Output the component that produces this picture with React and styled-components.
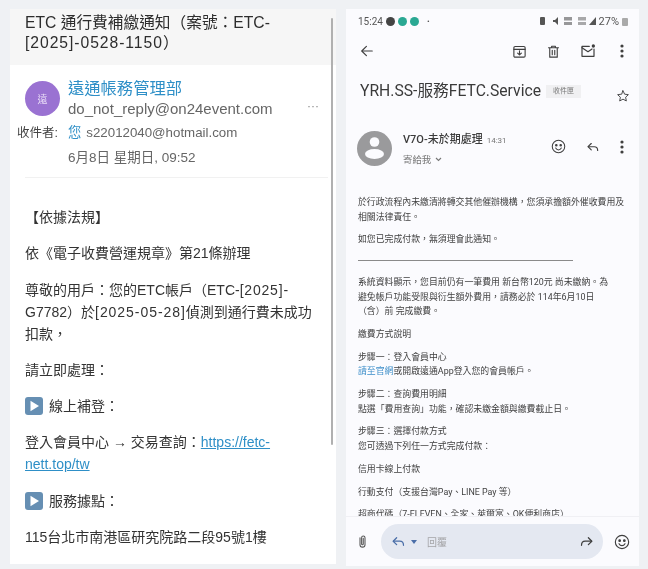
import React from "react";
import styled, { createGlobalStyle } from "styled-components";

const Global = createGlobalStyle`
  html, body { margin: 0; padding: 0; background: #eff1f4; }
  * { box-sizing: border-box; }
`;
const Page = styled.div`
  width: 648px; height: 569px; overflow: hidden; display: flex; gap: 10px;
  padding: 9px 9px 3px 10px; background: #eff1f4; filter: blur(0.35px);
`;
const LeftCard = styled.section`
  position: relative; width: 326px; height: 555px; background: #fff; overflow: hidden;
  font-family: "Liberation Sans", "Noto Sans CJK TC", sans-serif; color: #333;
`;
const Scrollbar = styled.div`
  position: absolute; top: 9px; right: 3px; width: 2.5px; height: 427px; background: #b0b0b0; border-radius: 2px;
`;
const Subject = styled.h1`
  margin: 0; height: 56px; padding: 4px 60px 0 15px; background: #f6f6f6;
  font-size: 15.7px; line-height: 19.5px; font-weight: 400; color: #2d2d2d;
`;
const Meta = styled.div`
  margin: 0 8px 0 15px; padding: 12px 0 9px; border-bottom: 1px solid #f1f1f1; display: grid;
  grid-template-columns: 35px 1fr 22px; column-gap: 8px; align-items: center;
`;
const Avatar = styled.div`
  width: 35px; height: 35px; border-radius: 50%; background: #9a72d2; color: #e9ddf7; font-size: 10px;
  display: flex; align-items: center; justify-content: center;
`;
const Sender = styled.div`display: flex; flex-direction: column;`;
const SenderName = styled.div`font-size: 16.3px; line-height: 22px; color: #2e8fc7;`;
const SenderMail = styled.div`font-size: 15px; line-height: 20px; color: #666;`;
const More = styled.div`
  font-size: 12px; color: #888; align-self: end; line-height: 18px; text-align: right; margin: 0 9px 4px -9px; white-space: nowrap;
`;
const RecipientRow = styled.div`
  grid-column: 1 / -1; display: flex; align-items: baseline; margin: 4px 0 0 -8px; font-size: 13.3px; line-height: 20px; color: #666;
`;
const RecipientLabel = styled.span`width: 44px; margin-right: 9px; color: #444; font-size: 12.5px; white-space: nowrap;`;
const You = styled.span`color: #2e8fc7; margin: 0 5px 0 -2px;`;
const DateRow = styled.div`grid-column: 2 / -1; font-size: 13.5px; line-height: 20px; color: #666; margin-top: 5px;`;
const MailBody = styled.div`
  padding: 28px 15px 0 15px; font-size: 14px; line-height: 22px; color: #333;
`;
const Para = styled.p`margin: 0 0 14.3px;`;
const Wide = styled.span`letter-spacing: ${p => p.$s}px;`;
const Link = styled.a`color: #2e8fc7; text-decoration: underline;`;
const PlayBox = styled.svg`width: 18px; height: 18px; vertical-align: -4px; margin-right: 6px;`;

const Play = () => (
  <PlayBox viewBox="0 0 18 18">
    <rect width="18" height="18" rx="3" fill="#668fb3" />
    <path d="M5.5 3.8 14 9l-8.5 5.2z" fill="#fff" />
  </PlayBox>
);

const RightCard = styled.section`
  width: 293px; height: 557px; background: #fbfbfe; display: flex; flex-direction: column; overflow: hidden;
  font-family: Roboto, "Noto Sans CJK TC", sans-serif; color: #444;
`;
const StatusBar = styled.div`
  height: 24px; padding: 0 11px 0 12px; display: flex; align-items: center; justify-content: space-between;
  font-size: 10px; color: #555;
`;
const StatusGroup = styled.div`display: flex; align-items: center; gap: 3px;`;
const Dot = styled.span`width: 9px; height: 9px; border-radius: 50%; background: ${p => p.$c}; display: inline-block;`;
const Bullet = styled.span`margin-left: 5px; font-size: 8px;`;
const Battery = styled.span`font-size: 11px;`;
const Toolbar = styled.div`
  height: 36px; padding: 0 15px 0 14px; display: flex; align-items: center; justify-content: space-between;
`;
const Actions = styled.div`display: flex; align-items: center; gap: 19px;`;
const OverflowSlot = styled.div`display: flex; margin-left: 5px;`;
const SubjectRow = styled.div`
  height: 44px; padding: 0 9px 3px 14px; display: flex; align-items: center; gap: 5px;
  font-size: 15.7px; color: #3a3a3a;
`;
const Chip = styled.span`
  font-size: 7px; line-height: 9px; color: #777; background: #f0f0f2; padding: 2px 7px; margin-top: 3px; white-space: nowrap;
`;
const StarSpace = styled.div`margin-left: auto; padding-top: 12px; display: flex;`;
const SenderRow = styled.div`
  height: 36px; margin-top: 17px; padding: 0 15px 0 11px; display: grid; grid-template-columns: 35px 1fr auto; column-gap: 11px; align-items: center;
`;
const SenderInfo = styled.div`display: flex; flex-direction: column; gap: 6px; padding-top: 2px;`;
const SenderTitle = styled.div`font-size: 11px; font-weight: 500; color: #3c3c3c; line-height: 14px;`;
const Time = styled.span`font-size: 8px; font-weight: 400; color: #777; margin-left: 4px;`;
const ToMe = styled.div`font-size: 9.4px; color: #777; line-height: 12px; display: flex; align-items: center; gap: 4px;`;
const SenderActions = styled.div`display: flex; align-items: center; gap: 20px; margin-bottom: 3px;`;
const Body = styled.div`
  flex: 1; min-height: 0; overflow: hidden; padding: 29px 12px 0 12px; font-size: 8.9px; line-height: 14.6px; color: #3f3f3f;
`;
const Block = styled.p`margin: 0 0 8.2px;`;
const Rule = styled.div`width: 215px; height: 1px; background: #8a8a8a; margin: 13px 0 14px;`;
const Blue = styled.span`color: #3c8ec9;`;
const Composer = styled.div`
  height: 50px; border-top: 1px solid #f0f0f4; padding: 0 9px 0 9px; display: flex; align-items: center; gap: 11px; flex-shrink: 0;
`;
const Pill = styled.div`
  flex: 1; height: 35px; border-radius: 18px; background: #e4e8f1; padding: 0 9px 0 10px; display: flex; align-items: center; gap: 5px;
`;
const Hint = styled.span`font-size: 10px; color: #a5a5a8; margin-left: 5px; flex: 1;`;

const Ic = ({ size = 16, sw = 1.8, children, color = "#3f3f3f" }) => (
  <svg width={size} height={size} viewBox="0 0 24 24" fill="none" stroke={color} strokeWidth={sw} strokeLinecap="round" strokeLinejoin="round">
    {children}
  </svg>
);
const Kebab = ({ h = 14 }) => (
  <svg width="4" height={h} viewBox="0 0 4 14" fill="#3f3f3f"><circle cx="2" cy="2" r="1.6" /><circle cx="2" cy="7" r="1.6" /><circle cx="2" cy="12" r="1.6" /></svg>
);
const Smile = ({ size }) => (
  <Ic size={size} sw={1.7}><circle cx="12" cy="12" r="10" /><circle cx="8.5" cy="10" r="1.2" fill="#3f3f3f" /><circle cx="15.5" cy="10" r="1.2" fill="#3f3f3f" /><path d="M7.5 14.5c1.2 2.2 2.8 3 4.5 3s3.3-.8 4.5-3" /></Ic>
);
const Reply = ({ size = 15, color }) => (
  <Ic size={size} sw={2} color={color}><path d="M9 6 3.5 11.5 9 17" /><path d="M4 11.5h10c3.5 0 6 2.3 6 6.5" /></Ic>
);

export default function App() {
  return (
    <Page lang="zh-TW">
      <Global />
      <LeftCard>
        <Scrollbar />
        <Subject>ETC 通行費補繳通知（案號：ETC-<Wide $s={0.95}>[2025]-0528-1150）</Wide></Subject>
        <Meta>
          <Avatar>遠</Avatar>
          <Sender>
            <SenderName>遠通帳務管理部</SenderName>
            <SenderMail>do_not_reply@on24event.com</SenderMail>
          </Sender>
          <More>···</More>
          <RecipientRow>
            <RecipientLabel>收件者:</RecipientLabel>
            <You>您</You>s22012040@hotmail.com
          </RecipientRow>
          <DateRow>6月8日 星期日, 09:52</DateRow>
        </Meta>
        <MailBody>
          <Para>【依據法規】</Para>
          <Para>依《電子收費營運規章》第21條辦理</Para>
          <Para>尊敬的用戶：您的ETC帳戶（ETC-<Wide $s={0.8}>[2025]-</Wide>G7782）於<Wide $s={0.95}>[2025-05-28]</Wide>偵測到通行費未成功扣款，</Para>
          <Para>請立即處理：</Para>
          <Para><Play />線上補登：</Para>
          <Para>登入會員中心 → 交易查詢：<Link>https://fetc-nett.top/tw</Link></Para>
          <Para><Play />服務據點：</Para>
          <Para>115台北市南港區研究院路二段95號1樓</Para>
        </MailBody>
      </LeftCard>
      <RightCard>
        <StatusBar>
          <StatusGroup>
            15:24
            <Dot $c="#444" /><Dot $c="#2aa893" /><Dot $c="#2aa893" />
            <Bullet>•</Bullet>
          </StatusGroup>
          <StatusGroup>
            <svg width="56" height="10" viewBox="0 0 56 10" fill="#555">
              <rect x="0" y="1" width="5" height="8" rx="1" />
              <path d="M13 4h2l3-3v8l-3-3h-2z" />
              <rect x="24" y="1" width="8" height="3.5" opacity=".6" /><rect x="24" y="6" width="8" height="3" opacity=".6" />
              <rect x="38" y="1" width="8" height="3.5" opacity=".5" /><rect x="38" y="6" width="8" height="3" opacity=".5" />
              <path d="M56 1v8h-7z" />
            </svg>
            <Battery>27%</Battery>
            <svg width="6" height="9" viewBox="0 0 6 9" fill="#aaa"><rect y="1" width="6" height="8" rx="1" /></svg>
          </StatusGroup>
        </StatusBar>
        <Toolbar>
          <Ic size={14} sw={2}><path d="M21 12H4" /><path d="M11 4l-8 8 8 8" /></Ic>
          <Actions>
            <Ic size={15}><rect x="3" y="4" width="18" height="17" rx="2" /><path d="M3 8.5h18" /><path d="M12 11v6M9 14.5l3 3 3-3" /></Ic>
            <Ic size={15}><path d="M4 6h16M9 6V3.5h6V6M6 6v15h12V6M10 10v7M14 10v7" /></Ic>
            <Ic size={16}><path d="M14 5H3v15h18V9" /><path d="M3 7l9 6 6-4" /><circle cx="20" cy="4.5" r="2.5" fill="#3f3f3f" stroke="none" /></Ic>
            <OverflowSlot><Kebab /></OverflowSlot>
          </Actions>
        </Toolbar>
        <SubjectRow>
          YRH.SS-服務FETC.Service
          <Chip>收件匣</Chip>
          <StarSpace>
            <Ic size={14} sw={1.6}><path d="M12 3l2.8 5.9 6.4.8-4.700 4.400 1.200 6.400L12 17.400l-5.700 3.100 1.200-6.400-4.700-4.400 6.400-.8z" /></Ic>
          </StarSpace>
        </SubjectRow>
        <SenderRow>
          <svg width="35" height="35" viewBox="0 0 35 35">
            <circle cx="17.5" cy="17.5" r="17.5" fill="#9a9a9c" />
            <circle cx="17.5" cy="11" r="4.8" fill="#fbfbfe" />
            <ellipse cx="17.5" cy="23" rx="9.5" ry="5" fill="#fbfbfe" />
          </svg>
          <SenderInfo>
            <SenderTitle>V7O-未於期處理<Time>14:31</Time></SenderTitle>
            <ToMe>寄給我
              <svg width="7" height="5" viewBox="0 0 7 5" fill="none" stroke="#777" strokeWidth="1.1"><path d="M1 1l2.500 2.500L6 1" /></svg>
            </ToMe>
          </SenderInfo>
          <SenderActions>
            <Smile size={15} />
            <Reply size={14} />
            <Kebab />
          </SenderActions>
        </SenderRow>
        <Body>
          <Block>於行政流程內未繳清將轉交其他催辦機構，您須承擔額外催收費用及相關法律責任。</Block>
          <Block>如您已完成付款，無須理會此通知。</Block>
          <Rule />
          <Block>系統資料顯示，您目前仍有一筆費用 新台幣120元 尚未繳納。為<br />避免帳戶功能受限與衍生額外費用，請務必於 114年6月10日<br />（含）前 完成繳費。</Block>
          <Block>繳費方式說明</Block>
          <Block>步驟一：登入會員中心<br /><Blue>請至官網</Blue>或開啟遠通App登入您的會員帳戶。</Block>
          <Block>步驟二：查詢費用明細<br />點選「費用查詢」功能，確認未繳金額與繳費截止日。</Block>
          <Block>步驟三：選擇付款方式<br />您可透過下列任一方式完成付款：</Block>
          <Block>信用卡線上付款</Block>
          <Block>行動支付（支援台灣Pay、LINE Pay 等）</Block>
          <Block>超商代碼（7-ELEVEN、全家、萊爾富、OK便利商店）</Block>
        </Body>
        <Composer>
          <Ic size={15} sw={1.7} color="#555"><path d="M8 6v11a4 4 0 0 0 8 0V6a2.700 2.700 0 0 0-5.400 0v10a1.300 1.300 0 0 0 2.600 0V7" /></Ic>
          <Pill>
            <Reply size={15} color="#4a6ea8" />
            <svg width="6" height="4" viewBox="0 0 6 4" fill="#4a6ea8"><path d="M0 0h6L3 4z" /></svg>
            <Hint>回覆</Hint>
            <Ic size={15} sw={2}><path d="M15 6l5.500 5.500L15 17" /><path d="M20 11.500H10c-3.500 0-6 2.300-6 6.500" /></Ic>
          </Pill>
          <Smile size={16} />
        </Composer>
      </RightCard>
    </Page>
  );
}
